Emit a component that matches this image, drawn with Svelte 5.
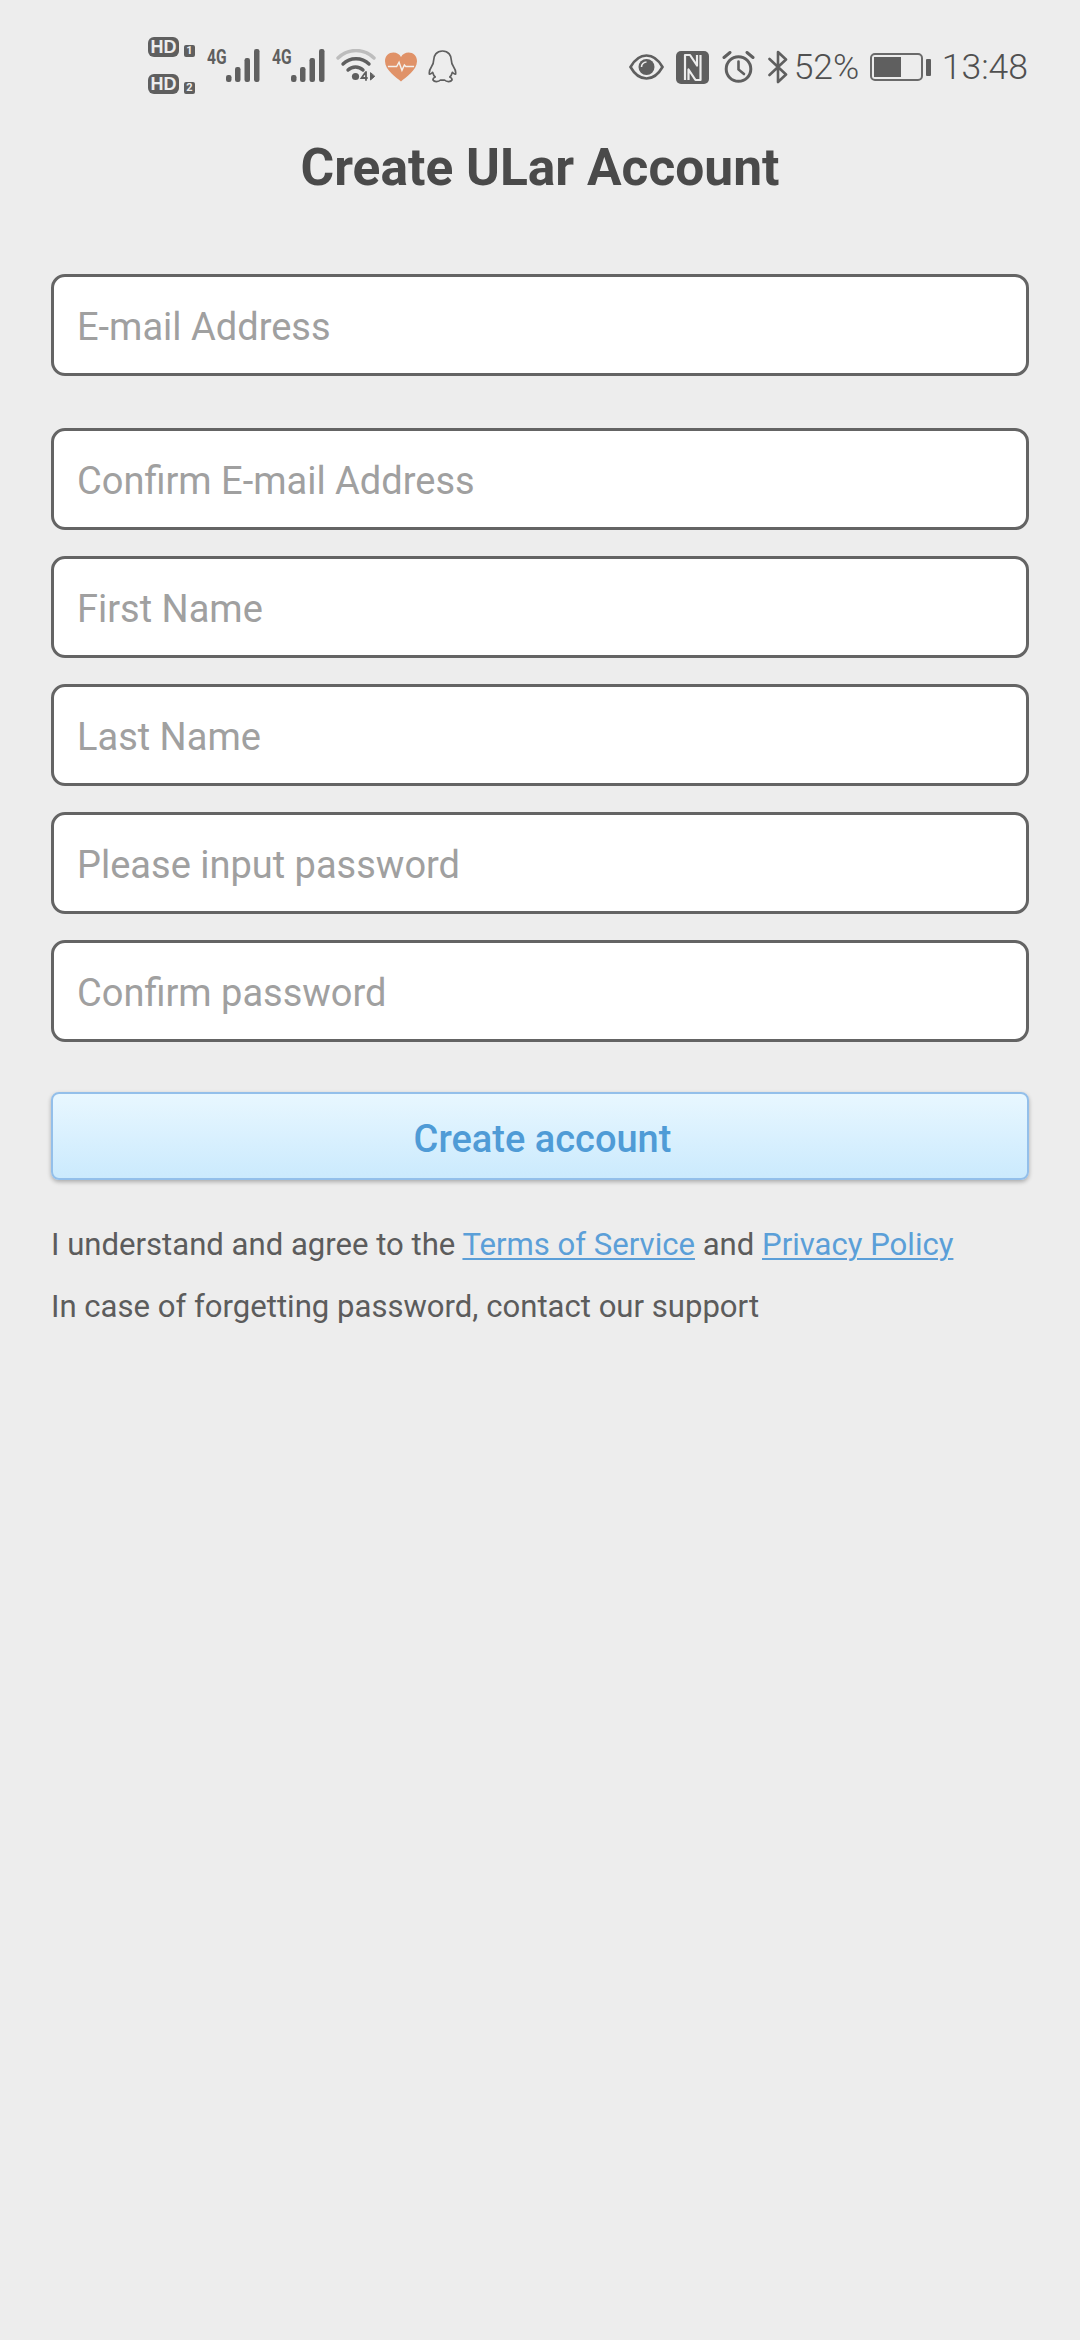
<script>
  const fields = [
    'E-mail Address',
    'Confirm E-mail Address',
    'First Name',
    'Last Name',
    'Please input password',
    'Confirm password'
  ];
  const bars = [
    { x: 0, h: 7 },
    { x: 9, h: 15 },
    { x: 18.5, h: 24 },
    { x: 28, h: 33 }
  ];
</script>

<div class="page">
  <header class="status">
    <div class="status-left">
      <div class="hd-stack">
        <div class="hd-row"><span class="hd">HD</span><span class="sim">1</span></div>
        <div class="hd-row"><span class="hd">HD</span><span class="sim">2</span></div>
      </div>
      {#each [0, 1] as _}
        <div class="net">
          <span class="net-label">4G</span>
          <svg class="bars" viewBox="0 0 35 33" width="35" height="33">
            {#each bars as b}
              <rect x={b.x} y={33 - b.h} width="5.5" height={b.h} rx="2.2" fill="#5f5f5f" />
            {/each}
          </svg>
        </div>
      {/each}
      <svg class="wifi" viewBox="0 0 40 32" width="40" height="32" fill="none" stroke-linecap="round">
        <path d="M2 9 C12 -1 28 -1 38 9" stroke="#bdbdbd" stroke-width="3.4" />
        <path d="M7 15 C14 8 26 8 33 15" stroke="#5f5f5f" stroke-width="3.4" />
        <path d="M12 21 C16 17 23 17 27 21" stroke="#5f5f5f" stroke-width="3.4" />
        <circle cx="19.5" cy="27.5" r="3.6" fill="#5f5f5f" />
        <path d="M29 24 L25.5 29 H31 M30 23 V31" stroke="#5f5f5f" stroke-width="1.8" />
        <path d="M34.5 24 V31 L38.5 27.5 Z" fill="#5f5f5f" stroke="#5f5f5f" stroke-width="1" />
      </svg>
      <svg class="heart" viewBox="0 0 33 30" width="33" height="30">
        <path d="M16.5 30 C12 25.5 0 18.5 0 9 C0 3.5 4 0 8.7 0 C12 0 15 1.7 16.5 4.6 C18 1.7 21 0 24.3 0 C29 0 33 3.5 33 9 C33 18.5 21 25.5 16.5 30 Z" fill="#e09268" />
        <path d="M3 14.5 H12 L14.5 10 L17.5 18.5 L20 13 L21.5 14.5 H30" fill="none" stroke="#f4f0ec" stroke-width="1.5" />
      </svg>
      <svg class="qq" viewBox="0 0 29 33" width="29" height="33" fill="none" stroke="#5f5f5f" stroke-width="1.7" stroke-linejoin="round">
        <path d="M14.5 1 C8.5 1 5.6 5.5 5.6 10.5 C5.6 13 5 14.5 3.6 16.5 C1.8 19.2 1 21.5 1.4 24 C2.5 24.5 3.6 23.5 4.6 22.3 C5.2 24.5 6 26 7.2 27 C5.5 27.8 4.6 29 5.2 30.3 C6.2 32 10.5 32 12.5 30 C13.5 30.2 15.5 30.2 16.5 30 C18.5 32 22.8 32 23.8 30.3 C24.4 29 23.5 27.8 21.8 27 C23 26 23.8 24.5 24.4 22.3 C25.4 23.5 26.5 24.5 27.6 24 C28 21.5 27.2 19.2 25.4 16.5 C24 14.5 23.4 13 23.4 10.5 C23.4 5.5 20.5 1 14.5 1 Z" />
      </svg>
    </div>
    <div class="status-right">
      <svg class="eye" viewBox="0 0 35 26" width="35" height="26">
        <path d="M1.5 13 C6 5 11 1.5 17.5 1.5 C24 1.5 29 5 33.5 13 C29 21 24 24.5 17.5 24.5 C11 24.5 6 21 1.5 13 Z" fill="none" stroke="#5f5f5f" stroke-width="2.6" />
        <circle cx="17.5" cy="13" r="8" fill="#5f5f5f" />
        <path d="M12.5 13 A5 5 0 0 1 17.5 8" fill="none" stroke="#ededed" stroke-width="1.6" />
      </svg>
      <svg class="nfc" viewBox="0 0 33 33" width="33" height="33">
        <rect width="33" height="33" rx="5" fill="#5f5f5f" />
        <path d="M9 29 V4 H14 L21 14.5 V4 M24.5 4 V29 H19.5 L12.5 18.5 V29" fill="none" stroke="#ededed" stroke-width="2.2" stroke-linejoin="round" />
      </svg>
      <svg class="alarm" viewBox="0 0 33 32" width="33" height="32" fill="none" stroke="#5f5f5f" stroke-linecap="round">
        <circle cx="16.5" cy="18" r="12.3" stroke-width="3" />
        <path d="M16.5 10.5 V18.5 L22 23" stroke-width="2.6" />
        <path d="M2 6.5 L8 1.5 M31 6.5 L25 1.5" stroke-width="3" />
      </svg>
      <svg class="bt" viewBox="0 0 21 34" width="21" height="34" fill="none" stroke="#5f5f5f" stroke-width="2.6" stroke-linejoin="round" stroke-linecap="round">
        <path d="M1.5 9 L18 24.5 L10 32 V2 L18 9.5 L1.5 25" />
      </svg>
      <span class="pct">52%</span>
      <div class="battery">
        <div class="cell"><div class="fill"></div></div>
        <div class="nub"></div>
      </div>
      <span class="clock">13:48</span>
    </div>
  </header>

  <h1>Create ULar Account</h1>

  <form class="form">
    <div class="fields">
      {#each fields as f}
        <input type="text" placeholder={f} />
      {/each}
    </div>
    <button type="button">Create account</button>
  </form>

  <div class="notes">
    <p>I understand and agree to the <a href="#terms">Terms of Service</a> and <a href="#privacy">Privacy Policy</a></p>
    <p>In case of forgetting password, contact our support</p>
  </div>
</div>

<style>
  :global(body) {
    margin: 0;
    background: #ededed;
  }
  .page {
    height: 2340px;
    background: #ededed;
    font-family: Roboto, "Liberation Sans", sans-serif;
    box-sizing: border-box;
    overflow: hidden;
  }
  .status {
    display: flex;
    justify-content: space-between;
    align-items: center;
    height: 64px;
    padding: 35px 52px 0 148px;
    color: #5f5f5f;
  }
  .status-left,
  .status-right {
    display: flex;
    align-items: center;
  }
  .status-left {
    gap: 10px;
    margin-bottom: 4px;
  }
  .status-right {
    gap: 13px;
  }
  .hd-stack {
    display: flex;
    flex-direction: column;
    gap: 17px;
    margin-right: 1px;
  }
  .hd-row {
    display: flex;
    align-items: flex-end;
    gap: 5px;
    height: 20px;
  }
  .hd {
    display: block;
    width: 31px;
    height: 20px;
    background: #5f5f5f;
    color: #ededed;
    border-radius: 6px;
    font-family: "Liberation Sans", sans-serif;
    font-size: 18px;
    line-height: 20px;
    font-weight: 700;
    text-align: center;
  }
  .sim {
    display: block;
    width: 11px;
    height: 12px;
    background: #5f5f5f;
    color: #ededed;
    border-radius: 2px;
    font-size: 11px;
    line-height: 12px;
    font-weight: 700;
    text-align: center;
  }
  .net {
    display: flex;
    align-items: flex-start;
    height: 33px;
    margin-left: 1px;
  }
  .net-label {
    width: 19px;
    font-size: 20px;
    line-height: 17px;
    font-weight: 700;
    transform: scaleX(0.78);
    transform-origin: left;
  }
  .wifi {
    margin-right: -1px;
  }
  .heart {
    width: 32px;
    margin-top: 3px;
  }
  .qq {
    margin-top: 3px;
    margin-left: 1px;
  }
  .eye {
    margin-right: -1.5px;
  }
  .pct,
  .clock {
    font-size: 35.5px;
    line-height: 40px;
    font-weight: 300;
    color: #505050;
  }
  .pct {
    margin-left: -8px;
  }
  .clock {
    margin-left: -2.5px;
  }
  .battery {
    display: flex;
    align-items: center;
    gap: 3px;
    margin-left: -2px;
  }
  .cell {
    width: 53px;
    height: 28px;
    box-sizing: border-box;
    border: 2px solid #6a6a6a;
    border-radius: 5px;
    padding: 2px;
  }
  .fill {
    width: 60%;
    height: 100%;
    background: #5f5f5f;
  }
  .nub {
    width: 5px;
    height: 17px;
    background: #5f5f5f;
    border-radius: 1px;
  }
  h1 {
    margin: 0;
    padding-top: 35px;
    font-size: 51.5px;
    line-height: 68px;
    font-weight: 700;
    color: #4a4a4a;
    text-align: center;
  }
  .form {
    margin: 0;
    padding: 72px 51px 0;
  }
  .fields {
    display: flex;
    flex-direction: column;
    gap: 26px;
  }
  input {
    display: block;
    width: 100%;
    height: 102px;
    box-sizing: border-box;
    border: 3px solid #646464;
    border-radius: 14px;
    background: #fff;
    padding: 4px 23px 0;
    font-family: inherit;
    font-size: 38px;
    color: #444;
    outline: none;
  }
  input:first-child {
    margin-bottom: 26px;
  }
  input::placeholder {
    color: #a0a0a0;
    opacity: 1;
  }
  button {
    display: block;
    width: 100%;
    height: 88px;
    margin-top: 50px;
    box-sizing: border-box;
    border: 2px solid #93bfea;
    border-radius: 8px;
    background: linear-gradient(#e8f7ff, #cbeafd);
    box-shadow: 0 2px 4px rgba(0, 0, 0, 0.28);
    font-family: inherit;
    font-size: 38px;
    font-weight: 500;
    color: #4f9bd6;
    padding: 5px 0 0 5px;
  }
  .notes {
    padding: 34px 51px 0;
  }
  p {
    margin: 0;
    font-size: 31.1px;
    line-height: 62px;
    color: #5c5c5c;
  }
  a {
    color: #5b9fd8;
    text-decoration: underline;
    text-underline-offset: 3px;
    text-decoration-thickness: 2px;
  }
</style>
